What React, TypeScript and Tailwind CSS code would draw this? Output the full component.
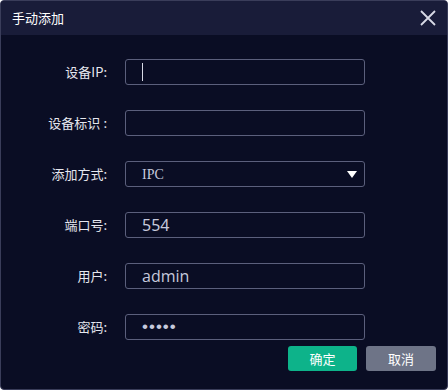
import { useState } from "react";

const rows = [
  { label: "设备IP:", value: "", kind: "cursor" },
  { label: "设备标识：", value: "", kind: "text" },
  { label: "添加方式:", value: "IPC", kind: "select" },
  { label: "端口号:", value: "554", kind: "text" },
  { label: "用户:", value: "admin", kind: "text" },
  { label: "密码:", value: "•••••", kind: "password" },
];

export default function App() {
  const [open] = useState(true);
  if (!open) return null;

  return (
    <div
      className="w-[448px] h-[390px] bg-[#0a0d24] border border-[#3a3d5a] rounded-[4px] overflow-hidden flex flex-col text-[#e6e7ef]"
      style={{ fontFamily: '"Noto Sans CJK SC", "Noto Sans", sans-serif' }}
    >
      {/* title bar */}
      <div className="h-[34px] bg-[#191c39] flex items-center justify-between pl-[11px] pr-[10px] shrink-0">
        <span className="text-[13px] text-white">手动添加</span>
        <svg width="18" height="18" viewBox="0 0 18 18" className="text-[#d8dae6]">
          <path d="M2 2 L16 16 M16 2 L2 16" stroke="currentColor" strokeWidth="1.8" />
        </svg>
      </div>

      {/* form */}
      <div className="flex flex-col gap-[25px] pt-[24px]">
        {rows.map((r) => (
          <div key={r.label} className="flex items-center h-[26px]">
            <div className="w-[106px] text-right text-[13px] text-[#e6e7ef]">
              {r.kind === "text" && r.label.endsWith("：") ? (
                <>
                  {r.label.slice(0, -1)}
                  <span className="ml-[3px]">:</span>
                </>
              ) : (
                r.label
              )}
            </div>
            <div className="ml-[18px] w-[240px] h-[26px] border border-[#5b5f7c] rounded-[3px] bg-[#0a0d24] flex items-center pl-[16px] pr-[6px]">
              {r.kind === "cursor" && <div className="w-px h-[18px] bg-[#d8dae6]" />}
              {r.kind === "text" && (
                <span
                  className="text-[16px] text-[#c6c9dc]"
                  style={{ fontFamily: r.value === "admin" ? '"Open Sans", sans-serif' : '"Noto Sans", sans-serif' }}
                >
                  {r.value}
                </span>
              )}
              {r.kind === "select" && (
                <>
                  <span className="text-[14px] text-[#c6c9dc]" style={{ fontFamily: '"Liberation Serif", serif' }}>
                    {r.value}
                  </span>
                  <svg width="10" height="7" viewBox="0 0 10 7" className="ml-auto mr-[1px]">
                    <path d="M0 0 H10 L5 7 Z" fill="#ffffff" />
                  </svg>
                </>
              )}
              {r.kind === "password" && (
                <span
                  className="text-[17px] text-[#c6c9dc] tracking-[1px]"
                  style={{ fontFamily: '"Liberation Sans", sans-serif' }}
                >
                  {r.value}
                </span>
              )}
            </div>
          </div>
        ))}
      </div>

      {/* buttons */}
      <div className="flex justify-end gap-[9px] pr-[11px] mt-[6px]">
        <button className="w-[69px] h-[25px] rounded-[3px] bg-[#0db38a] text-white text-[13px]">确定</button>
        <button className="w-[70px] h-[25px] rounded-[3px] bg-[#6e7487] text-white text-[13px]">取消</button>
      </div>
    </div>
  );
}
